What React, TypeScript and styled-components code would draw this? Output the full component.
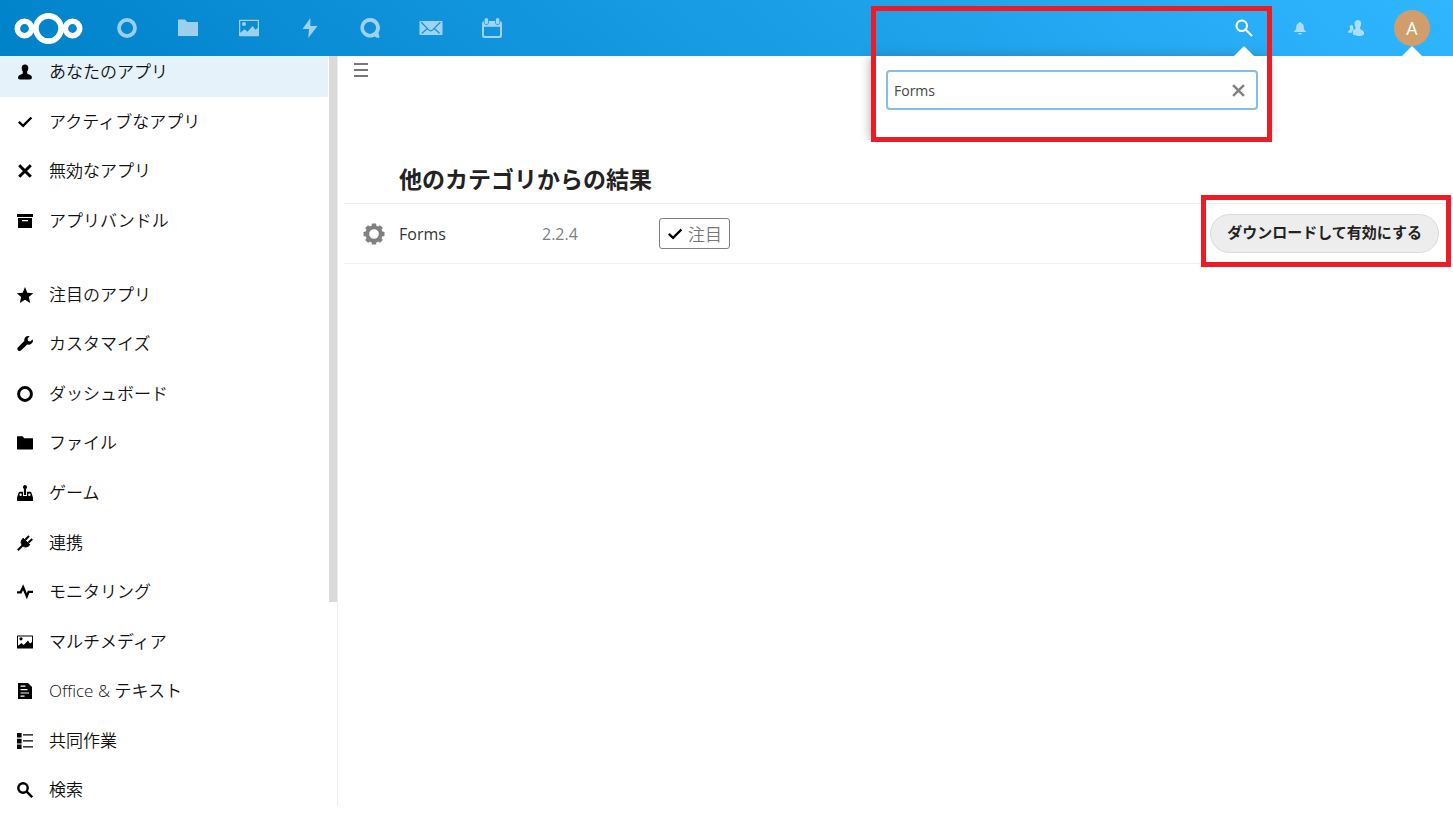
import React from "react";
import styled, { createGlobalStyle } from "styled-components";

const GlobalStyle = createGlobalStyle`
  *, *::before, *::after { box-sizing: border-box; }
  body {
    margin: 0;
    background: #fff;
    color: #222;
    font-family: "Open Sans", "Noto Sans CJK JP", sans-serif;
    font-size: 16px;
  }
  button, input { font: inherit; color: inherit; }
  svg { display: block; }
`;

/* ---------- layout ---------- */

const Page = styled.div`
  display: flex;
  flex-direction: column;
  min-height: 100vh;
`;

const Header = styled.header`
  position: relative;
  display: flex;
  align-items: stretch;
  height: 56px;
  padding: 0 13px;
  background: linear-gradient(40deg, #0082c9 0%, #30b6ff 100%);
`;

const LogoLink = styled.a`
  display: flex;
  align-items: center;
  width: 84px;
`;

const AppMenu = styled.nav`
  display: flex;
  width: 425px;
`;

const AppLink = styled.a`
  flex: 1;
  display: flex;
  align-items: center;
  justify-content: center;
  color: #fff;
  opacity: 0.6;
`;

const HeaderTools = styled.div`
  display: flex;
  margin-left: auto;
`;

const ToolButton = styled.button<{ $active?: boolean; $pointer?: boolean }>`
  position: relative;
  display: flex;
  align-items: center;
  justify-content: center;
  width: 56px;
  padding: 0;
  border: 0;
  background: none;
  color: ${(p) => (p.$active ? "#fff" : "rgba(255, 255, 255, 0.6)")};

  &::after {
    content: "";
    display: ${(p) => (p.$pointer ? "block" : "none")};
    position: absolute;
    bottom: 0;
    left: 18px;
    z-index: 3;
    border: 10px solid transparent;
    border-top-width: 0;
    border-bottom-color: #fff;
  }
`;

const Avatar = styled.span`
  display: flex;
  align-items: center;
  justify-content: center;
  width: 36px;
  height: 36px;
  border-radius: 50%;
  background: #d09e6d;
  color: #fff;
  font-size: 18px;
`;

const SearchPanel = styled.form`
  position: absolute;
  top: 56px;
  right: 186px;
  z-index: 2;
  width: 396px;
  height: 84px;
  padding: 14px 9px 0 15px;
  background: #fff;
  box-shadow: 0 1px 10px rgba(77, 77, 77, 0.5);
  clip-path: inset(-12px -12px 0 -12px);
`;

const SearchField = styled.div`
  display: flex;
  align-items: center;
  height: 40px;
  padding-right: 10px;
  border: 2px solid #7fc0e4;
  border-radius: 4px;
  background: #fff;
`;

const SearchInput = styled.input`
  flex: 1;
  min-width: 0;
  padding: 0 6px;
  border: 0;
  outline: 0;
  background: none;
  color: #444;
  font-size: 14px;
`;

const ClearButton = styled.button`
  padding: 0;
  border: 0;
  background: none;
  color: #808080;
`;

const Highlight = styled.div<{ $area: "search" | "action" }>`
  position: absolute;
  z-index: 4;
  border: 5px solid #ed1c24;
  pointer-events: none;
  ${(p) =>
    p.$area === "search"
      ? "top: 6px; right: 181px; width: 401px; height: 136px;"
      : "top: -9px; right: 2px; width: 250px; height: 72px;"}
`;

const Body = styled.div`
  display: flex;
  flex: 1;
`;

const Sidebar = styled.aside`
  display: flex;
  flex: none;
  width: 338px;
  height: 750px;
  border-right: 1px solid #ededed;
`;

const CategoryNav = styled.nav`
  flex: 1;
  height: 760px;
  overflow: hidden;
`;

const ScrollTrack = styled.div`
  width: 9px;
  padding-left: 1px;
`;

const ScrollThumb = styled.div`
  height: 546px;
  background: #dadada;
`;

const CategoryList = styled.ul<{ $first?: boolean }>`
  display: flex;
  flex-direction: column;
  height: ${(p) => (p.$first ? "199px" : "545px")};
  margin: ${(p) => (p.$first ? "-9px 0 24px" : "0")};
  padding: 0;
  list-style: none;
`;

const CategoryItem = styled.li`
  flex: 1;
  display: flex;
`;

const CategoryLink = styled.a<{ $selected?: boolean }>`
  flex: 1;
  display: flex;
  align-items: center;
  background: ${(p) => (p.$selected ? "#e5f2fa" : "none")};
  color: #111;
  font-size: 17px;
  font-weight: 350;
  line-height: 24px;
  text-decoration: none;
`;

const CategoryIcon = styled.span`
  width: 49px;
  padding-left: 17px;
  color: #000;
`;

const Content = styled.main`
  flex: 1;
  min-width: 0;
  padding: 6px 0 0 6px;
`;

const MenuToggle = styled.button`
  display: block;
  margin-left: 9px;
  padding: 0;
  border: 0;
  background: none;
  color: #777;
`;

const SectionTitle = styled.h2`
  margin: 84px 0 0 55px;
  height: 41px;
  font-size: 23px;
  font-weight: 700;
  line-height: 34px;
`;

const AppTable = styled.table`
  width: 100%;
  border-collapse: collapse;
  table-layout: fixed;
`;

const Cell = styled.td<{ $width?: number; $muted?: boolean }>`
  width: ${(p) => (p.$width ? `${p.$width}px` : "auto")};
  height: 60px;
  padding: 0;
  border-top: 1px solid #ededed;
  border-bottom: 1px solid #f2f2f2;
  color: ${(p) => (p.$muted ? "#808080" : "#333")};
  vertical-align: middle;
`;

const IconCell = styled(Cell)`
  padding-left: 19px;
  color: #808080;
`;

const ActionCell = styled(Cell)`
  position: relative;
  padding-right: 14px;
  text-align: right;
`;

const Badge = styled.span`
  display: inline-flex;
  align-items: center;
  gap: 5px;
  height: 31px;
  padding: 0 7px;
  border: 1px solid #808080;
  border-radius: 3px;
  color: #777;
  font-size: 17px;
  font-weight: 350;
  vertical-align: middle;

  svg { color: #000; }
`;

const InstallButton = styled.button`
  height: 39px;
  padding: 0 16px 3px;
  border: 1px solid #dbdbdb;
  border-radius: 20px;
  background: #ededed;
  color: #222;
  font-size: 15px;
  font-weight: 700;
  line-height: 20px;
  white-space: nowrap;
  vertical-align: middle;
`;

/* ---------- icons ---------- */

const Svg = ({
  size = 16,
  box = 16,
  children,
}: {
  size?: number;
  box?: number;
  children: React.ReactNode;
}) => (
  <svg width={size} height={size} viewBox={`0 0 ${box} ${box}`} fill="currentColor" aria-hidden="true">
    {children}
  </svg>
);

const Logo = () => (
  <svg width="70" height="34" viewBox="0 0 70 34" fill="none" stroke="#fff" strokeWidth="5.6" role="img" aria-label="Nextcloud">
    <circle cx="11.5" cy="17.5" r="7.2" />
    <circle cx="35.5" cy="17.5" r="12.6" />
    <circle cx="59.5" cy="17.5" r="7.2" />
  </svg>
);

const RingShape = () => <circle cx="8" cy="8" r="6.4" fill="none" stroke="currentColor" strokeWidth="3" />;
const FolderShape = () => <path d="M0 1.6Q0 1.2.4 1.2H5.5L7.3 3.2H15.6Q16 3.2 16 3.6V14Q16 14.4 15.6 14.4H.4Q0 14.4 0 14Z" />;
const PictureShape = () => (
  <path
    fillRule="evenodd"
    d="M.6 1.4H15.4Q16 1.4 16 2V14Q16 14.6 15.4 14.6H.6Q0 14.6 0 14V2Q0 1.4.6 1.4ZM1 2.4V11.8L4.5 8.9 6.7 11 11 6.4 13 9.4 15 8V2.4ZM4 3.2A1.6 1.6 0 1 1 4 6.4A1.6 1.6 0 0 1 4 3.2Z"
  />
);
const BoltShape = () => <path d="M8.3 0 2 8.8H7.2L6.6 16 14 6.4H8.3Z" />;
const TalkShape = () => (
  <path
    fillRule="evenodd"
    d="M8 0A7.8 7.8 0 1 0 11.8 14.7C12.8 15.5 14.7 16 15.4 15.5C15.8 15 14.9 12.6 14.8 11.8A7.8 7.8 0 0 0 8 0ZM8 3A4.8 4.8 0 1 1 8 12.7A4.8 4.8 0 0 1 8 3Z"
  />
);
const MailIcon = () => (
  <svg width="24" height="16" viewBox="0 0 24 16" aria-hidden="true">
    <mask id="mail-lines">
      <rect width="24" height="16" fill="#fff" />
      <path d="M2.5 2.5 9.5 9.7Q11.7 12 14 9.7L21 2.5M3.3 13 8 8.8M20.2 13 15.5 8.8" fill="none" stroke="#000" strokeWidth="1.2" strokeLinecap="round" />
    </mask>
    <rect x=".5" y="1" width="23" height="14" rx=".8" fill="currentColor" mask="url(#mail-lines)" />
  </svg>
);
const CalendarShape = () => (
  <path
    fillRule="evenodd"
    d="M3.5 0C4.3 0 4.9.6 4.9 1.4V3.6A1.4 1.4 0 0 1 2.1 3.6V1.4C2.1.6 2.7 0 3.5 0ZM12.5 0C13.3 0 13.9.6 13.9 1.4V3.6A1.4 1.4 0 0 1 11.1 3.6V1.4C11.1.6 11.7 0 12.5 0ZM1.6 2.4V3.6A1.9 1.9 0 0 0 5.5 3.6V2.4H10.5V3.6A1.9 1.9 0 0 0 14.4 3.6V2.4Q16 2.8 16 4.4V14Q16 16 14 16H2Q0 16 0 14V4.4Q0 2.8 1.6 2.4ZM1.6 7V13.6Q1.6 14.4 2.4 14.4H13.6Q14.4 14.4 14.4 13.6V7Z"
  />
);
const SearchShape = ({ weight }: { weight: number }) => (
  <g fill="none" stroke="currentColor" strokeWidth={weight}>
    <circle cx="6" cy="6" r="4.7" />
    <path d="M9.4 9.4 15.2 15.2" />
  </g>
);
const BellShape = () => (
  <path d="M8 1C7.2 1 6.7 1.6 6.7 2.3C4.5 3 3.7 4.8 3.7 7C3.7 9.5 3 10.6 1.3 11.4Q.8 12.7 1.6 12.7H14.4Q15.2 12.7 14.7 11.4C13 10.6 12.3 9.5 12.3 7C12.3 4.8 11.5 3 9.3 2.3C9.3 1.6 8.8 1 8 1ZM5.8 13.6A2.2 1.8 0 0 0 10.2 13.6Z" />
);
const ContactsShape = () => (
  <path d="M9.8 0C7.7 0 6.3 1.6 6.5 4C6.6 5.3 7.1 6.2 7.4 6.8V8.9C6.4 9.5 5.2 10 4.9 11.3C4.3 13.6 5 16 10.5 16S16.3 13.8 16 12.3C15.6 10.4 13.4 9.9 12.2 8.9V6.8C12.6 6.2 13 5.3 13.1 4C13.3 1.6 11.9 0 9.8 0ZM3.3 5C2 5 1.5 6 1.7 7.2C1.8 8 2.2 8.4 2.3 8.7V9.7C1.4 10.2.2 10.4.1 11.8Q0 12.8 1.4 12.8H3.9C4 10.8 4.8 9.8 6.2 8.9L5 8.5C5 8.2 5.2 7.8 5.2 7C5.3 5.8 4.6 5 3.3 5Z" />
);
const UserShape = () => (
  <path d="M8 .5C5.9.5 4.5 2 4.7 4.3C4.8 5.8 5.2 6.7 5.8 7.4V9.4C4.4 10.4 1.8 10.6 1.2 12.5C.7 14.3 1.6 15.5 3 15.5H13C14.4 15.5 15.3 14.3 14.8 12.5C14.2 10.6 11.6 10.4 10.2 9.4V7.4C10.8 6.7 11.2 5.8 11.3 4.3C11.5 2 10.1.5 8 .5Z" />
);
const CheckShape = () => <path d="M1.8 7.9 6.1 11.9 14.4 3.5" fill="none" stroke="currentColor" strokeWidth="2.4" />;
const CloseShape = ({ weight = 3 }: { weight?: number }) => (
  <path d="M2.2 2.2 13.8 13.8M13.8 2.2 2.2 13.8" fill="none" stroke="currentColor" strokeWidth={weight} />
);
const ArchiveShape = () => <path fillRule="evenodd" d="M0 1H16V4H0ZM1 5H15V15H1ZM5 7V8.2H11V7Z" />;
const StarShape = () => <path d="M8 0 10.3 5.7 16.3 6.2 11.8 10.1 13.2 16 8 12.8 2.8 16 4.2 10.1-.3 6.2 5.7 5.7Z" />;
const WrenchShape = () => (
  <path d="M11.2 0C8.6.1 6.9 2.3 7.3 4.9L.8 11.4C-.7 13.1 1.5 16.2 3.9 14.6L10.2 8.5C13 9.1 15.8 7.5 16 4.7L15.6 3.6 13.2 5.5 11 4.9 10.6 2.6 12.6.3Z" />
);
const GamesShape = () => (
  <path
    fillRule="evenodd"
    d="M8 0A2.2 2.2 0 0 1 9.1 4V10H6.9V4A2.2 2.2 0 0 1 8 0ZM3 6.8H6V11H10V6.8H13Q14.2 6.8 14.5 8L16 12.5V16H0V12.5L1.5 8Q1.8 6.8 3 6.8ZM3.6 8.6A1.2 1.2 0 1 0 3.6 11A1.2 1.2 0 0 0 3.6 8.6ZM12.4 8.6A1.2 1.2 0 1 0 12.4 11A1.2 1.2 0 0 0 12.4 8.6Z"
  />
);
const PlugShape = () => (
  <g fill="none" stroke="currentColor" strokeWidth="2">
    <path d="M.8 15.2 6 10M8.3 4.7 12 1M11.3 7.7 15.2 4" />
    <path d="M6.2 3.2 12.8 9.8C10.5 12.5 7.5 12.6 5.5 10.5S3.8 5.5 6.2 3.2Z" fill="currentColor" strokeWidth="1" />
  </g>
);
const PulseShape = () => <path d="M0 8.3H3.7L6.1 3.2 9.8 12.3 11.6 7.8H16" fill="none" stroke="currentColor" strokeWidth="2.3" />;
const DocumentShape = () => (
  <path fillRule="evenodd" d="M1.5 0H11L15 4V15.5Q15 16 14.5 16H1.5Q1 16 1 15.5V.5Q1 0 1.5 0ZM3.5 2.6V3.8H8.5V2.6ZM3.5 6V7.2H10.5V6ZM3.5 9.4V10.6H12V9.4ZM3.5 12.6V13.8H7.5V12.6Z" />
);
const ListShape = () => <path d="M0 0H4.6V4.6H0ZM0 5.8H4.6V10.4H0ZM0 11.6H4.6V16H0ZM6 1.2H16V2.4H6ZM6 7.2H16V8.4H6ZM6 13.2H16V14.4H6Z" />;

const Gear = () => (
  <Svg size={22}>
    <circle cx="8" cy="8" r="4.9" fill="none" stroke="currentColor" strokeWidth="2.8" />
    {[0, 45, 90, 135, 180, 225, 270, 315].map((a) => (
      <rect key={a} x="6.4" y=".4" width="3.2" height="2.7" rx=".4" transform={`rotate(${a} 8 8)`} />
    ))}
  </Svg>
);

const Hamburger = () => (
  <svg width="16" height="16" viewBox="0 0 16 16" fill="currentColor" aria-hidden="true">
    <path d="M1 1H15V3H1ZM1 7H15V9H1ZM1 13H15V15H1Z" />
  </svg>
);

/* ---------- data ---------- */

const apps = [
  { label: "ダッシュボード", icon: <Svg size={20}><RingShape /></Svg> },
  { label: "ファイル", icon: <Svg size={20}><FolderShape /></Svg> },
  { label: "写真", icon: <Svg size={20}><PictureShape /></Svg> },
  { label: "アクティビティ", icon: <Svg size={20}><BoltShape /></Svg> },
  { label: "トーク", icon: <Svg size={20}><TalkShape /></Svg> },
  { label: "メール", icon: <MailIcon /> },
  { label: "カレンダー", icon: <Svg size={20}><CalendarShape /></Svg> },
];

const ownCategories = [
  { label: "あなたのアプリ", shape: <UserShape />, selected: true },
  { label: "アクティブなアプリ", shape: <CheckShape /> },
  { label: "無効なアプリ", shape: <CloseShape /> },
  { label: "アプリバンドル", shape: <ArchiveShape /> },
];

const storeCategories = [
  { label: "注目のアプリ", shape: <StarShape /> },
  { label: "カスタマイズ", shape: <WrenchShape /> },
  { label: "ダッシュボード", shape: <RingShape /> },
  { label: "ファイル", shape: <FolderShape /> },
  { label: "ゲーム", shape: <GamesShape /> },
  { label: "連携", shape: <PlugShape /> },
  { label: "モニタリング", shape: <PulseShape /> },
  { label: "マルチメディア", shape: <PictureShape /> },
  { label: "Office & テキスト", shape: <DocumentShape /> },
  { label: "共同作業", shape: <ListShape /> },
  { label: "検索", shape: <SearchShape weight={2.4} /> },
];

type Category = { label: string; shape: React.ReactNode; selected?: boolean };

const Categories = ({ items, first }: { items: Category[]; first?: boolean }) => (
  <CategoryList $first={first}>
    {items.map((c) => (
      <CategoryItem key={c.label}>
        <CategoryLink href="#" $selected={c.selected}>
          <CategoryIcon><Svg>{c.shape}</Svg></CategoryIcon>
          {c.label}
        </CategoryLink>
      </CategoryItem>
    ))}
  </CategoryList>
);

export default function App() {
  return (
    <Page>
      <GlobalStyle />
      <Header>
        <LogoLink href="#"><Logo /></LogoLink>
        <AppMenu>
          {apps.map((a) => (
            <AppLink key={a.label} href="#" aria-label={a.label}>{a.icon}</AppLink>
          ))}
        </AppMenu>
        <HeaderTools>
          <ToolButton $active $pointer aria-label="検索"><Svg size={18}><SearchShape weight={1.8} /></Svg></ToolButton>
          <ToolButton aria-label="通知"><Svg size={14}><BellShape /></Svg></ToolButton>
          <ToolButton aria-label="連絡先"><Svg size={16}><ContactsShape /></Svg></ToolButton>
          <ToolButton $active $pointer aria-label="設定"><Avatar>A</Avatar></ToolButton>
        </HeaderTools>
        <SearchPanel onSubmit={(e) => e.preventDefault()}>
          <SearchField>
            <SearchInput type="text" aria-label="検索" defaultValue="Forms" />
            <ClearButton type="reset" aria-label="クリア"><Svg size={15}><CloseShape weight={2.6} /></Svg></ClearButton>
          </SearchField>
        </SearchPanel>
        <Highlight $area="search" />
      </Header>
      <Body>
        <Sidebar>
          <CategoryNav>
            <Categories items={ownCategories} first />
            <Categories items={storeCategories} />
          </CategoryNav>
          <ScrollTrack><ScrollThumb /></ScrollTrack>
        </Sidebar>
        <Content>
          <MenuToggle aria-label="メニュー"><Hamburger /></MenuToggle>
          <SectionTitle>他のカテゴリからの結果</SectionTitle>
          <AppTable>
            <tbody>
              <tr>
                <IconCell $width={55}><Gear /></IconCell>
                <Cell $width={143}>Forms</Cell>
                <Cell $width={117} $muted>2.2.4</Cell>
                <Cell><Badge><Svg><CheckShape /></Svg>注目</Badge></Cell>
                <ActionCell $width={260}>
                  <InstallButton>ダウンロードして有効にする</InstallButton>
                  <Highlight $area="action" />
                </ActionCell>
              </tr>
            </tbody>
          </AppTable>
        </Content>
      </Body>
    </Page>
  );
}
